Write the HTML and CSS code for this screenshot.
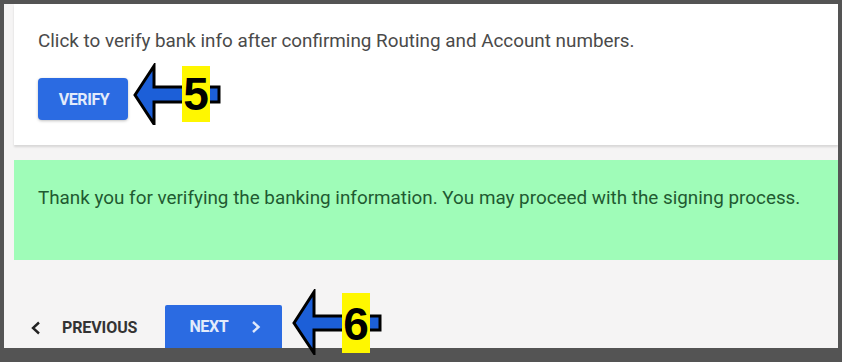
FILE: index.html
```html
<html>

<head>
    <title>Bank Verification</title>
    <link rel="stylesheet" href="styles.css">
</head>

<body>
    <div class="screen">
        <div class="card">
            <p class="hint">Click to verify bank info after confirming Routing and Account numbers.</p>
            <button class="btn btn-verify">VERIFY</button>
        </div>

        <div class="alert">
            Thank you for verifying the banking information. You may proceed with the signing process.
        </div>

        <div class="nav">
            <button class="btn-link">
                <svg class="chev" width="12" height="14" viewBox="0 0 12 14">
                    <path d="M9 1.5 L3 7 L9 12.5" fill="none" stroke="#222" stroke-width="2.4" />
                </svg>
                PREVIOUS
            </button>
            <button class="btn btn-next">
                NEXT
                <svg class="chev" width="12" height="14" viewBox="0 0 12 14">
                    <path d="M3 2 L8.5 7 L3 12" fill="none" stroke="#dfe8fb" stroke-width="2.4" />
                </svg>
            </button>
        </div>
    </div>

    <!-- tutorial callouts -->
    <div class="callout callout-5">
        <svg width="90" height="62" viewBox="0 0 90 62">
            <path d="M2 32 L21 3 L21 24 L86 24 L86 39 L21 39 L21 61 Z" fill="#1c5fd8" stroke="#000" stroke-width="3" stroke-linejoin="miter" />
        </svg>
        <span class="tag">5</span>
    </div>

    <div class="callout callout-6">
        <svg width="92" height="66" viewBox="0 0 92 66">
            <path d="M2 34 L22 3 L22 27 L88 27 L88 41 L22 41 L22 64 Z" fill="#1c5fd8" stroke="#000" stroke-width="3" stroke-linejoin="miter" />
        </svg>
        <span class="tag">6</span>
    </div>
</body>

</html>
```

FILE: styles.css
```css
body {
    margin: 0;
    background: #545454;
    font-family: Roboto, "Liberation Sans", Arial, sans-serif;
}

.screen {
    margin: 4px 4px 0 4px;
    height: 344px;
    background: #f5f4f4;
    overflow: hidden;
}

.card {
    margin-left: 10px;
    background: #ffffff;
    padding: 25px 24px 25px 24px;
    box-shadow: 0 2px 2px rgba(0, 0, 0, 0.12);
}

.hint {
    margin: 0 0 25px 0;
    font-size: 18.85px;
    line-height: 24px;
    color: #4a4a4a;
}

.btn {
    border: none;
    border-radius: 4px;
    background: #2b6be2;
    color: #e3ebfb;
    font-family: Roboto, "Liberation Sans", Arial, sans-serif;
    font-weight: bold;
    font-size: 16px;
    letter-spacing: -0.4px;
    cursor: pointer;
}

.btn-verify {
    display: block;
    width: 90px;
    height: 42px;
    padding: 0 0 0 2px;
    box-shadow: 0 1px 3px rgba(0, 0, 0, 0.25);
}

.alert {
    margin: 15px 0 0 10px;
    height: 100px;
    box-sizing: border-box;
    padding: 26px 24px;
    background: #9ffcb8;
    color: #1f5a31;
    font-size: 18.85px;
    line-height: 24px;
}

.nav {
    display: flex;
    align-items: flex-start;
    margin-top: 45px;
    padding-left: 26px;
}

.btn-link {
    display: flex;
    align-items: center;
    gap: 20px;
    margin-top: 13px;
    border: none;
    background: transparent;
    font-family: Roboto, "Liberation Sans", Arial, sans-serif;
    font-weight: bold;
    font-size: 16px;
    letter-spacing: -0.1px;
    color: #333;
    padding: 0;
}

.btn-next {
    display: flex;
    align-items: center;
    justify-content: center;
    gap: 22px;
    margin-left: 28px;
    width: 117px;
    height: 46px;
    padding: 0 0 3px 4px;
    border-radius: 2px;
}

.callout {
    position: absolute;
}

.callout svg {
    display: block;
}

.callout-5 {
    left: 133px;
    top: 63px;
}

.callout-6 {
    left: 292px;
    top: 289px;
}

.tag {
    position: absolute;
    background: #fff700;
    color: #000;
    font-family: "Liberation Sans", Arial, sans-serif;
    font-weight: bold;
    font-size: 46px;
    line-height: 56px;
    width: 28px;
    text-align: center;
}

.callout-5 .tag {
    left: 49px;
    top: 3px;
}

.callout-6 .tag {
    left: 50px;
    top: 4px;
    height: 60px;
    line-height: 62px;
}
```
